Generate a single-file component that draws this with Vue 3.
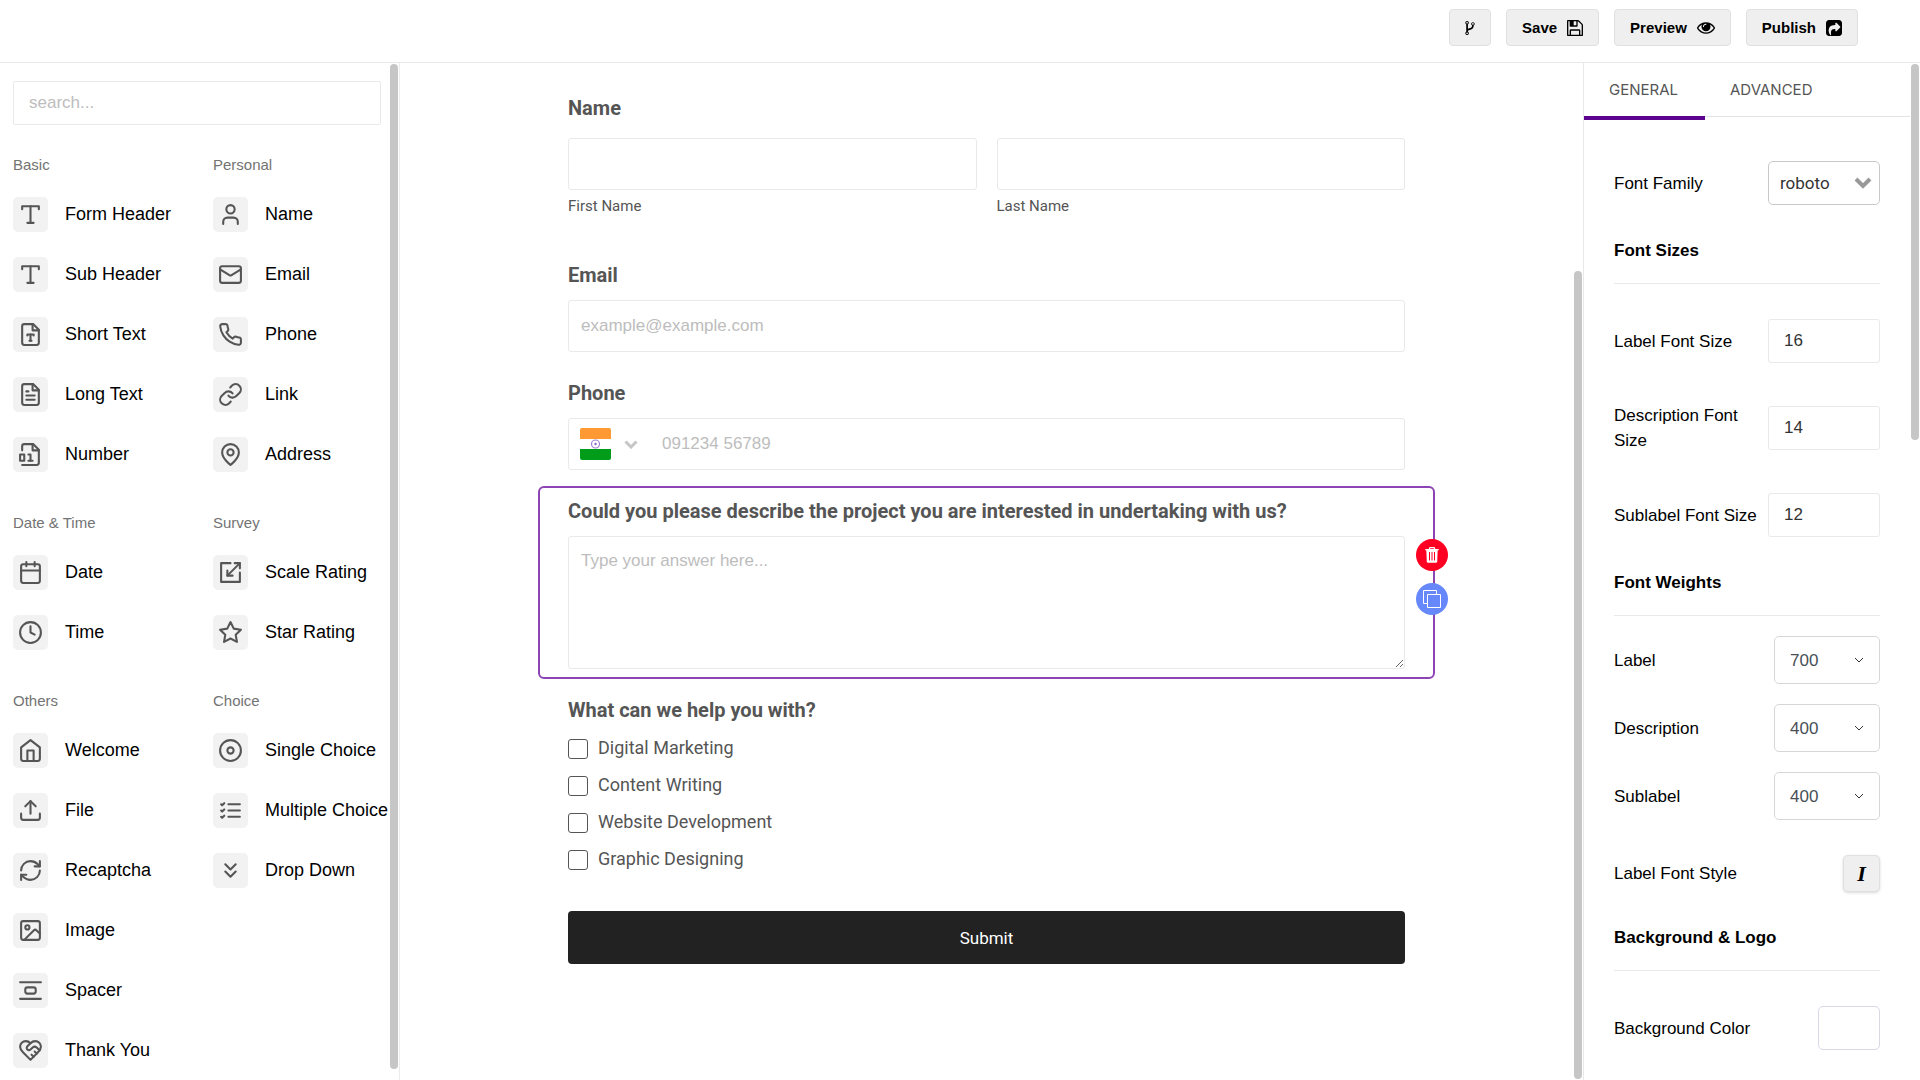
<script setup>
import { ref } from 'vue'

const iconPaths = {
  type: ['M4 7V4h16v3', 'M9 20h6', 'M12 4v16'],
  fileType: ['M14.5 2H6a2 2 0 0 0-2 2v16a2 2 0 0 0 2 2h12a2 2 0 0 0 2-2V7.5L14.5 2z', 'M14 2v6h6', 'M9 13v-1h6v1', 'M11 18h2', 'M12 12v6'],
  fileText: ['M14.5 2H6a2 2 0 0 0-2 2v16a2 2 0 0 0 2 2h12a2 2 0 0 0 2-2V7.5L14.5 2z', 'M14 2v6h6', 'M16 13H8', 'M16 17H8', 'M10 9H8'],
  fileDigit: ['M4 22h14a2 2 0 0 0 2-2V7.5L14.5 2H6a2 2 0 0 0-2 2v4', 'M14 2v6h6', 'M2 12h4v6H2z', 'M10 12h2v6', 'M10 18h4'],
  user: ['M19 21v-2a4 4 0 0 0-4-4H9a4 4 0 0 0-4 4v2', 'M8 7a4 4 0 1 0 8 0a4 4 0 1 0-8 0'],
  mail: ['M4 4h16a2 2 0 0 1 2 2v12a2 2 0 0 1-2 2H4a2 2 0 0 1-2-2V6a2 2 0 0 1 2-2z', 'm22 7-8.97 5.7a1.94 1.94 0 0 1-2.06 0L2 7'],
  phone: ['M22 16.92v3a2 2 0 0 1-2.18 2 19.79 19.79 0 0 1-8.63-3.07 19.5 19.5 0 0 1-6-6 19.79 19.79 0 0 1-3.07-8.67A2 2 0 0 1 4.11 2h3a2 2 0 0 1 2 1.72 12.84 12.84 0 0 0 .7 2.81 2 2 0 0 1-.45 2.11L8.09 9.91a16 16 0 0 0 6 6l1.27-1.27a2 2 0 0 1 2.11-.45 12.84 12.84 0 0 0 2.81.7A2 2 0 0 1 22 16.92z'],
  link: ['M10 13a5 5 0 0 0 7.54.54l3-3a5 5 0 0 0-7.07-7.07l-1.72 1.71', 'M14 11a5 5 0 0 0-7.54-.54l-3 3a5 5 0 0 0 7.07 7.07l1.71-1.71'],
  pin: ['M20 10c0 6-8 12-8 12s-8-6-8-12a8 8 0 0 1 16 0Z', 'M9 10a3 3 0 1 0 6 0a3 3 0 1 0-6 0'],
  calendar: ['M5 4h14a2 2 0 0 1 2 2v14a2 2 0 0 1-2 2H5a2 2 0 0 1-2-2V6a2 2 0 0 1 2-2z', 'M16 2v4', 'M8 2v4', 'M3 10h18'],
  clock: ['M2 12a10 10 0 1 0 20 0a10 10 0 1 0-20 0', 'M12 6v6l4 2'],
  scaling: ['M21 3 9 15', 'M12 3H3v18h18v-9', 'M16 3h5v5', 'M14 15H9v-5'],
  star: ['m12 2 3.09 6.26L22 9.27l-5 4.87 1.18 6.88L12 17.77l-6.18 3.25L7 14.14 2 9.27l6.91-1.01L12 2z'],
  home: ['m3 9 9-7 9 7v11a2 2 0 0 1-2 2H5a2 2 0 0 1-2-2z', 'M9 22V12h6v10'],
  upload: ['M21 15v4a2 2 0 0 1-2 2H5a2 2 0 0 1-2-2v-4', 'm17 8-5-5-5 5', 'M12 3v12'],
  refresh: ['M3 12a9 9 0 0 1 9-9 9.75 9.75 0 0 1 6.74 2.74L21 8', 'M21 3v5h-5', 'M21 12a9 9 0 0 1-9 9 9.75 9.75 0 0 1-6.74-2.74L3 16', 'M8 16H3v5'],
  image: ['M5 3h14a2 2 0 0 1 2 2v14a2 2 0 0 1-2 2H5a2 2 0 0 1-2-2V5a2 2 0 0 1 2-2z', 'M7 9a2 2 0 1 0 4 0a2 2 0 1 0-4 0', 'm21 15-3.086-3.086a2 2 0 0 0-2.828 0L6 21'],
  spacer: ['M9 9h6a2 2 0 0 1 2 2v2a2 2 0 0 1-2 2H9a2 2 0 0 1-2-2v-2a2 2 0 0 1 2-2z', 'M22 20H2', 'M22 4H2'],
  heart: ['M19 14c1.49-1.46 3-3.21 3-5.5A5.5 5.5 0 0 0 16.5 3c-1.76 0-3 .5-4.5 2-1.5-1.5-2.74-2-4.5-2A5.5 5.5 0 0 0 2 8.5c0 2.3 1.5 4.05 3 5.5l7 7Z', 'M12 5 9.04 7.96a2.17 2.17 0 0 0 0 3.08c.82.82 2.13.85 3 .07l2.07-1.9a2.82 2.82 0 0 1 3.79 0l2.96 2.66', 'm18 15-2-2', 'm15 18-2-2'],
  disc: ['M2 12a10 10 0 1 0 20 0a10 10 0 1 0-20 0', 'M9 12a3 3 0 1 0 6 0a3 3 0 1 0-6 0'],
  checks: ['M10 6h11', 'M10 12h11', 'M10 18h11', 'm3 6 1 1 2-2', 'm3 12 1 1 2-2', 'm3 18 1 1 2-2'],
  chevrons: ['m7 6 5 5 5-5', 'm7 13 5 5 5-5'],
}

const groups = [
  { title: 'Basic', items: [['type', 'Form Header'], ['type', 'Sub Header'], ['fileType', 'Short Text'], ['fileText', 'Long Text'], ['fileDigit', 'Number']] },
  { title: 'Personal', items: [['user', 'Name'], ['mail', 'Email'], ['phone', 'Phone'], ['link', 'Link'], ['pin', 'Address']] },
  { title: 'Date & Time', items: [['calendar', 'Date'], ['clock', 'Time']] },
  { title: 'Survey', items: [['scaling', 'Scale Rating'], ['star', 'Star Rating']] },
  { title: 'Others', items: [['home', 'Welcome'], ['upload', 'File'], ['refresh', 'Recaptcha'], ['image', 'Image'], ['spacer', 'Spacer'], ['heart', 'Thank You']] },
  { title: 'Choice', items: [['disc', 'Single Choice'], ['checks', 'Multiple Choice'], ['chevrons', 'Drop Down']] },
]

const services = ['Digital Marketing', 'Content Writing', 'Website Development', 'Graphic Designing']
const checked = ref([])

const sizes = ref([
  { id: 'label-size', label: 'Label Font Size', value: '16' },
  { id: 'description-size', label: 'Description Font Size', value: '14' },
  { id: 'sublabel-size', label: 'Sublabel Font Size', value: '12' },
])
const weights = ref([
  { id: 'label-weight', label: 'Label', value: '700' },
  { id: 'description-weight', label: 'Description', value: '400' },
  { id: 'sublabel-weight', label: 'Sublabel', value: '400' },
])
const weightOptions = ['400', '500', '600', '700']
</script>

<template>
  <div class="builder">
    <header class="topbar">
      <button type="button" class="action" aria-label="Versions">
        <svg class="fork" viewBox="0 128 1024 1536"><path d="M288 1472q0-40-28-68t-68-28-68 28-28 68 28 68 68 28 68-28 28-68zM288 320q0-40-28-68t-68-28-68 28-28 68 28 68 68 28 68-28 28-68zM928 448q0-40-28-68t-68-28-68 28-28 68 28 68 68 28 68-28 28-68zM1024 448q0 52-26 96.5t-70 69.5q-2 287-226 414-67 38-203 81-128 40-169.5 71t-41.5 100v26q44 25 70 69.5t26 96.5q0 80-56 136t-136 56-136-56-56-136q0-52 26-96.5t70-69.5v-820q-44-25-70-69.5t-26-96.5q0-80 56-136t136-56 136 56 56 136q0 52-26 96.5t-70 69.5v497q54-26 154-57 55-17 87.5-29.5t70.5-31 59-39.5 40.5-51 28-69.5 8.5-91.5q-44-25-70-69.5t-26-96.5q0-80 56-136t136-56 136 56 56 136z" /></svg>
      </button>
      <button type="button" class="action">
        Save
        <svg class="glyph" viewBox="0 128 1536 1536"><path d="M384 1536h768v-384h-768v384zM1280 1536h128v-896q0-14-10-38.5t-20-34.5l-281-281q-10-10-34-20t-39-10v416q0 40-28 68t-68 28h-576q-40 0-68-28t-28-68v-416h-128v1280h128v-416q0-40 28-68t68-28h832q40 0 68 28t28 68v416zM896 608v-320q0-13-9.5-22.5t-22.5-9.5h-192q-13 0-22.5 9.5t-9.5 22.5v320q0 13 9.5 22.5t22.5 9.5h192q13 0 22.5-9.5t9.5-22.5zM1536 640v928q0 40-28 68t-68 28h-1344q-40 0-68-28t-28-68v-1344q0-40 28-68t68-28h928q40 0 88 20t76 48l280 280q28 28 48 76t20 88z" /></svg>
      </button>
      <button type="button" class="action">
        Preview
        <svg class="eye" viewBox="0 384 1792 1152"><path d="M1664 960q-152-236-381-353 61 104 61 225 0 185-131.5 316.5t-316.5 131.5-316.5-131.5-131.5-316.5q0-121 61-225-229 117-381 353 133 205 333.5 326.5t434.5 121.5 434.5-121.5 333.5-326.5zM944 576q0-20-14-34t-34-14q-125 0-214.5 89.5t-89.5 214.5q0 20 14 34t34 14 34-14 14-34q0-86 61-147t147-61q20 0 34-14t14-34zM1792 960q0 34-20 69-140 230-376.5 368.5t-499.5 138.5-499.5-139-376.5-368q-20-35-20-69t20-69q140-229 376.5-368t499.5-139 499.5 139 376.5 368q20 35 20 69z" /></svg>
      </button>
      <button type="button" class="action">
        Publish
        <svg class="glyph" viewBox="0 128 1536 1536"><path d="M1005 1197l352-352q19-19 19-45t-19-45l-352-352q-30-31-69-14-40 17-40 59v160q-119 0-216 19.5t-162.5 51-114 79-76.5 95.5-44.5 109-21.5 111.5-5 110.5q0 181 167 404 11 12 25 12 7 0 13-3 22-9 19-33-44-354 62-473 46-52 130-75.5t224-23.5v160q0 42 40 59 12 5 24 5 26 0 45-19zM1536 416v960q0 119-84.5 203.5t-203.5 84.5h-960q-119 0-203.5-84.5t-84.5-203.5v-960q0-119 84.5-203.5t203.5-84.5h960q119 0 203.5 84.5t84.5 203.5z" /></svg>
      </button>
    </header>

    <div class="workspace">
      <aside class="palette">
        <div class="scroller palette-body">
          <input class="search" type="search" placeholder="search..." aria-label="Search elements" />
          <div class="groups">
            <section v-for="group in groups" :key="group.title">
              <h2 class="group-title">{{ group.title }}</h2>
              <ul class="items">
                <li v-for="[icon, name] in group.items" :key="name">
                  <button type="button" class="item">
                    <span class="tile">
                      <svg viewBox="0 0 24 24"><path v-for="d in iconPaths[icon]" :key="d" :d="d" /></svg>
                    </span>
                    {{ name }}
                  </button>
                </li>
              </ul>
            </section>
          </div>
        </div>
        <div class="thumb thumb-palette" aria-hidden="true"></div>
      </aside>

      <main class="canvas">
        <div class="scroller">
          <form class="form" @submit.prevent>
            <fieldset class="block block-name">
              <legend class="question">Name</legend>
              <div class="names">
                <div class="name-part">
                  <input id="first-name" class="field" type="text" />
                  <label for="first-name" class="sublabel">First Name</label>
                </div>
                <div class="name-part">
                  <input id="last-name" class="field" type="text" />
                  <label for="last-name" class="sublabel">Last Name</label>
                </div>
              </div>
            </fieldset>

            <div class="block">
              <label class="question" for="email">Email</label>
              <input id="email" class="field" type="email" placeholder="example@example.com" />
            </div>

            <div class="block">
              <label class="question" for="phone">Phone</label>
              <div class="phone">
                <button type="button" class="country" aria-label="Country: India">
                  <svg class="flag" viewBox="0 0 31 32">
                    <rect width="31" height="32" rx="2" fill="#fff" />
                    <path d="M2 0h27a2 2 0 0 1 2 2v9H0V2a2 2 0 0 1 2-2z" fill="#ff9933" />
                    <path d="M0 21h31v9a2 2 0 0 1-2 2H2a2 2 0 0 1-2-2z" fill="#009c1a" />
                    <circle cx="15.5" cy="16" r="4" fill="none" stroke="#a07fd6" stroke-width="1.2" />
                    <circle cx="15.5" cy="16" r="1.2" fill="#8a63cc" />
                  </svg>
                  <svg class="caret" viewBox="0 0 14 9"><path d="m1.5 1.5 5.5 5.5 5.5-5.5" /></svg>
                </button>
                <input id="phone" class="phone-input" type="tel" placeholder="091234 56789" />
              </div>
            </div>

            <div class="block selected">
              <label class="question" for="project">Could you please describe the project you are interested in undertaking with us?</label>
              <textarea id="project" class="field area" placeholder="Type your answer here..."></textarea>
              <div class="tools">
                <button type="button" class="tool delete" aria-label="Delete">
                  <svg viewBox="0 0 14 16">
                    <path d="M4.5 2V1.2Q4.5.7 5 .7h4q.5 0 .5.5V2" fill="none" stroke="#fff" stroke-width="1.2" />
                    <path d="M.3 2h13.4v1.3H.3z" fill="#fff" />
                    <path d="M1.3 3h11.4l-.5 11.5q-.1 1.2-1.3 1.2H3.1q-1.2 0-1.3-1.2z" fill="#fff" />
                    <path d="M4.5 5v8.5M7 5v8.5M9.5 5v8.5" stroke="#ff0022" stroke-width="1" />
                  </svg>
                </button>
                <button type="button" class="tool copy" aria-label="Duplicate">
                  <svg viewBox="0 0 18 18"><path d="M4 13.5H.5V.5h13V4M4.500 4.500h13v13h-13z" fill="none" stroke="#fff" /></svg>
                </button>
              </div>
            </div>

            <fieldset class="block">
              <legend class="question">What can we help you with?</legend>
              <div class="options">
                <label v-for="service in services" :key="service" class="option">
                  <input v-model="checked" type="checkbox" :value="service" />
                  {{ service }}
                </label>
              </div>
            </fieldset>

            <div class="submit-row">
              <button type="submit" class="submit">Submit</button>
            </div>
          </form>
        </div>
        <div class="thumb thumb-canvas" aria-hidden="true"></div>
      </main>

      <aside class="settings">
        <div class="scroller">
          <nav class="tabs">
            <button type="button" class="tab active">GENERAL</button>
            <button type="button" class="tab">ADVANCED</button>
          </nav>
          <div class="options-panel">
            <div class="row">
              <label for="font-family">Font Family</label>
              <div class="select family">
                <select id="font-family"><option>roboto</option><option>lato</option></select>
                <svg viewBox="0 0 18 12"><path d="m2 2 7 7 7-7" /></svg>
              </div>
            </div>

            <h3>Font Sizes</h3>
            <div class="stack loose">
              <div v-for="size in sizes" :key="size.id" class="row">
                <label :for="size.id">{{ size.label }}</label>
                <input :id="size.id" v-model="size.value" class="number" type="text" inputmode="numeric" />
              </div>
            </div>

            <h3>Font Weights</h3>
            <div class="stack tight">
              <div v-for="weight in weights" :key="weight.id" class="row">
                <label :for="weight.id">{{ weight.label }}</label>
                <div class="select weight">
                  <select :id="weight.id" v-model="weight.value">
                    <option v-for="option in weightOptions" :key="option">{{ option }}</option>
                  </select>
                  <svg viewBox="0 0 10 6"><path d="m1 1 4 4 4-4" /></svg>
                </div>
              </div>
            </div>
            <div class="row style-row">
              <span id="label-style">Label Font Style</span>
              <button type="button" class="italic" aria-labelledby="label-style">I</button>
            </div>

            <h3>Background &amp; Logo</h3>
            <div class="stack loose">
              <div class="row">
                <label for="background-color">Background Color</label>
                <input id="background-color" class="swatch" type="color" value="#ffffff" />
              </div>
            </div>
          </div>
        </div>
        <div class="thumb thumb-settings" aria-hidden="true"></div>
      </aside>
    </div>
  </div>
</template>

<style>
body {
  margin: 0;
  background: #fff;
}
</style>

<style scoped>
.builder,
.builder * {
  box-sizing: border-box;
}
.builder {
  display: flex;
  flex-direction: column;
  height: 100vh;
  color: #000;
  font-family: "Liberation Sans", Arial, sans-serif;
  font-size: 17px;
}
button,
input,
select,
textarea {
  margin: 0;
  font: inherit;
  color: inherit;
}
button {
  cursor: pointer;
}
ul {
  margin: 0;
  padding: 0;
  list-style: none;
}
fieldset,
legend {
  margin: 0;
  padding: 0;
  min-width: 0;
}
::placeholder {
  color: #bdbdbd;
  opacity: 1;
}

.topbar {
  display: flex;
  flex: none;
  justify-content: flex-end;
  gap: 15px;
  padding: 9px 62px 16px;
  border-bottom: 1px solid #e9e9e9;
}
.action {
  display: flex;
  align-items: center;
  gap: 10px;
  height: 37px;
  padding: 0 15px;
  border: 1px solid #e0e0e0;
  border-radius: 4px;
  background: #efefef;
  font-size: 15px;
  font-weight: 700;
}
.fork {
  width: 10px;
  height: 14px;
}
.glyph {
  width: 16px;
  height: 16px;
}
.eye {
  width: 18px;
  height: 12px;
}

.workspace {
  display: flex;
  flex: 1;
  min-height: 0;
}
.palette,
.canvas,
.settings {
  position: relative;
  min-height: 0;
}
.scroller {
  height: 100%;
  overflow-y: auto;
  scrollbar-width: none;
}
.thumb {
  position: absolute;
  right: 1px;
  width: 8px;
  border-radius: 4px;
  background: #c6c6c6;
}
.thumb-palette {
  top: 1px;
  bottom: 11px;
}
.thumb-canvas {
  top: 208px;
  bottom: 1px;
}
.thumb-settings {
  top: 1px;
  height: 37%;
}

.palette {
  flex: none;
  width: 400px;
  border-right: 1px solid #ececec;
}
.palette-body {
  padding: 18px 0 0 13px;
}
.search {
  display: block;
  width: 368px;
  height: 44px;
  padding: 0 15px;
  border: 1px solid #e9e9e9;
  border-radius: 2px;
  outline: 0;
  appearance: none;
}
.groups {
  display: grid;
  grid-template-columns: 200px 1fr;
  row-gap: 41px;
  margin-top: 30px;
}
.group-title {
  margin: 0 0 22px;
  color: #737373;
  font-size: 15px;
  font-weight: 400;
  line-height: 20px;
}
.items {
  display: flex;
  flex-direction: column;
  gap: 25px;
}
.item {
  display: flex;
  align-items: center;
  gap: 17px;
  padding: 0;
  border: 0;
  background: none;
  white-space: nowrap;
  font-size: 18px;
}
.tile {
  display: grid;
  flex: none;
  place-items: center;
  width: 35px;
  height: 35px;
  border-radius: 5px;
  background: #f2f2f2;
}
.tile svg {
  width: 25px;
  height: 25px;
  fill: none;
  stroke: #555;
  stroke-width: 2;
  stroke-linecap: round;
  stroke-linejoin: round;
}

.canvas {
  flex: 1;
  min-width: 0;
  color: #555;
  font-family: Roboto, sans-serif;
}
.canvas .scroller {
  padding-right: 10px;
}
.form {
  display: flex;
  flex-direction: column;
  gap: 6px;
  max-width: 897px;
  margin: 0 auto;
  padding-top: 20px;
}
.block {
  display: flex;
  flex-direction: column;
  padding: 11px 28px 8px;
  border: 2px solid transparent;
  border-radius: 6px;
}
.question {
  float: left;
  margin-bottom: 13px;
  font-size: 20px;
  font-weight: 700;
  line-height: 24px;
}
.block-name {
  padding-bottom: 27px;
}
.block-name .question {
  margin-bottom: 18px;
}
.field {
  display: block;
  width: 100%;
  height: 52px;
  padding: 0 12px;
  border: 1px solid #e9e9e9;
  border-radius: 3px;
  outline: 0;
  background: #fff;
  font-family: "Liberation Sans", Arial, sans-serif;
}
.names {
  display: flex;
  clear: both;
  gap: 20px;
}
.name-part {
  flex: 1;
}
.sublabel {
  display: block;
  margin-top: 7px;
  font-size: 15px;
  line-height: 18px;
}
.phone {
  display: flex;
  height: 52px;
  border: 1px solid #e9e9e9;
  border-radius: 3px;
}
.country {
  display: flex;
  align-items: center;
  gap: 13px;
  padding: 0 11px;
  border: 0;
  background: none;
}
.flag {
  width: 31px;
  height: 32px;
}
.caret {
  width: 14px;
  height: 9px;
  fill: none;
  stroke: #c6c6c6;
  stroke-width: 3;
}
.phone-input {
  flex: 1;
  min-width: 0;
  padding: 0 13px;
  border: 0;
  outline: 0;
  background: none;
  font-family: "Liberation Sans", Arial, sans-serif;
}
.selected {
  position: relative;
  border-color: #8d44b5;
}
.area {
  height: 133px;
  padding-top: 12px;
  line-height: 24px;
  resize: vertical;
}
.tools {
  position: absolute;
  top: 51px;
  right: -15px;
  display: flex;
  flex-direction: column;
  gap: 12px;
}
.tool {
  display: grid;
  place-items: center;
  width: 32px;
  height: 32px;
  padding: 0;
  border: 0;
  border-radius: 50%;
}
.delete {
  background: #ff0022;
}
.delete svg {
  width: 14px;
  height: 16px;
}
.copy {
  background: #6688fb;
}
.copy svg {
  width: 18px;
  height: 18px;
}
.options {
  display: flex;
  flex-direction: column;
  clear: both;
  gap: 17px;
  padding-top: 4px;
}
.option {
  display: flex;
  align-items: flex-start;
  gap: 10px;
  height: 20px;
  font-size: 18px;
  line-height: 18px;
}
.option input {
  width: 20px;
  height: 20px;
  border: 1px solid #555;
  border-radius: 3px;
  background: #fff;
  appearance: none;
}
.option input:checked {
  background: #555;
}
.submit-row {
  padding: 25px 30px 40px;
}
.submit {
  width: 100%;
  height: 53px;
  border: 0;
  border-radius: 4px;
  background: #222;
  color: #fff;
}

.settings {
  flex: none;
  width: 337px;
  border-left: 1px solid #e9e9e9;
}
.tabs {
  display: flex;
  height: 54px;
  margin-right: 10px;
  border-bottom: 1px solid #e3e3e3;
}
.tab {
  position: relative;
  padding: 0 27px 0 25px;
  border: 0;
  background: none;
  color: #555;
  font-family: Inter, sans-serif;
  font-size: 15px;
}
.active::after {
  content: "";
  position: absolute;
  top: 53px;
  left: 0;
  width: 100%;
  height: 4px;
  background: #5c0390;
}
.options-panel {
  padding: 44px 40px 29px 30px;
  line-height: 25px;
}
.row {
  display: flex;
  align-items: center;
  justify-content: space-between;
  gap: 8px;
}
h3 {
  margin: 34px 0 0;
  padding-bottom: 20px;
  border-bottom: 1px solid #e9e9e9;
  font-size: 17px;
  font-weight: 700;
  line-height: 24px;
}
.stack {
  display: flex;
  flex-direction: column;
}
.loose {
  gap: 40px;
  padding-top: 35px;
}
.tight {
  gap: 20px;
  padding-top: 20px;
}
.select {
  display: grid;
  flex: none;
  align-items: center;
}
.select select,
.select svg {
  grid-area: 1 / 1;
}
.select select {
  width: 100%;
  height: 100%;
  border-radius: 5px;
  outline: 0;
  background: #fff;
  appearance: none;
}
.select svg {
  justify-self: end;
  fill: none;
  pointer-events: none;
}
.family {
  width: 112px;
  height: 44px;
}
.family select {
  padding: 0 11px;
  border: 1px solid #c8c8c8;
  color: #333;
  font-family: Roboto, sans-serif;
}
.family svg {
  width: 18px;
  height: 12px;
  margin-right: 8px;
  stroke: #999;
  stroke-width: 4;
}
.weight {
  width: 106px;
  height: 48px;
}
.weight select {
  padding: 0 15px;
  border: 1px solid #d6d6d6;
  color: #495057;
}
.weight svg {
  width: 10px;
  height: 6px;
  margin-right: 16px;
  stroke: #333;
}
.number {
  flex: none;
  width: 112px;
  height: 44px;
  padding: 0 15px;
  border: 1px solid #e9e9e9;
  border-radius: 3px;
  outline: 0;
  color: #333;
}
.style-row {
  padding-top: 35px;
}
.italic {
  width: 37px;
  height: 37px;
  padding: 0;
  border: 1px solid #e0e0e0;
  border-radius: 5px;
  background: #efefef;
  box-shadow: 0 1px 3px rgba(0, 0, 0, 0.15);
  font-family: "Liberation Serif", serif;
  font-size: 22px;
  font-style: italic;
  font-weight: 700;
}
.swatch {
  width: 62px;
  height: 44px;
  padding: 6px;
  border: 1px solid #d9d9e6;
  border-radius: 5px;
  background: #fff;
}
.swatch::-webkit-color-swatch-wrapper {
  padding: 0;
}
.swatch::-webkit-color-swatch {
  border: 0;
}
</style>
